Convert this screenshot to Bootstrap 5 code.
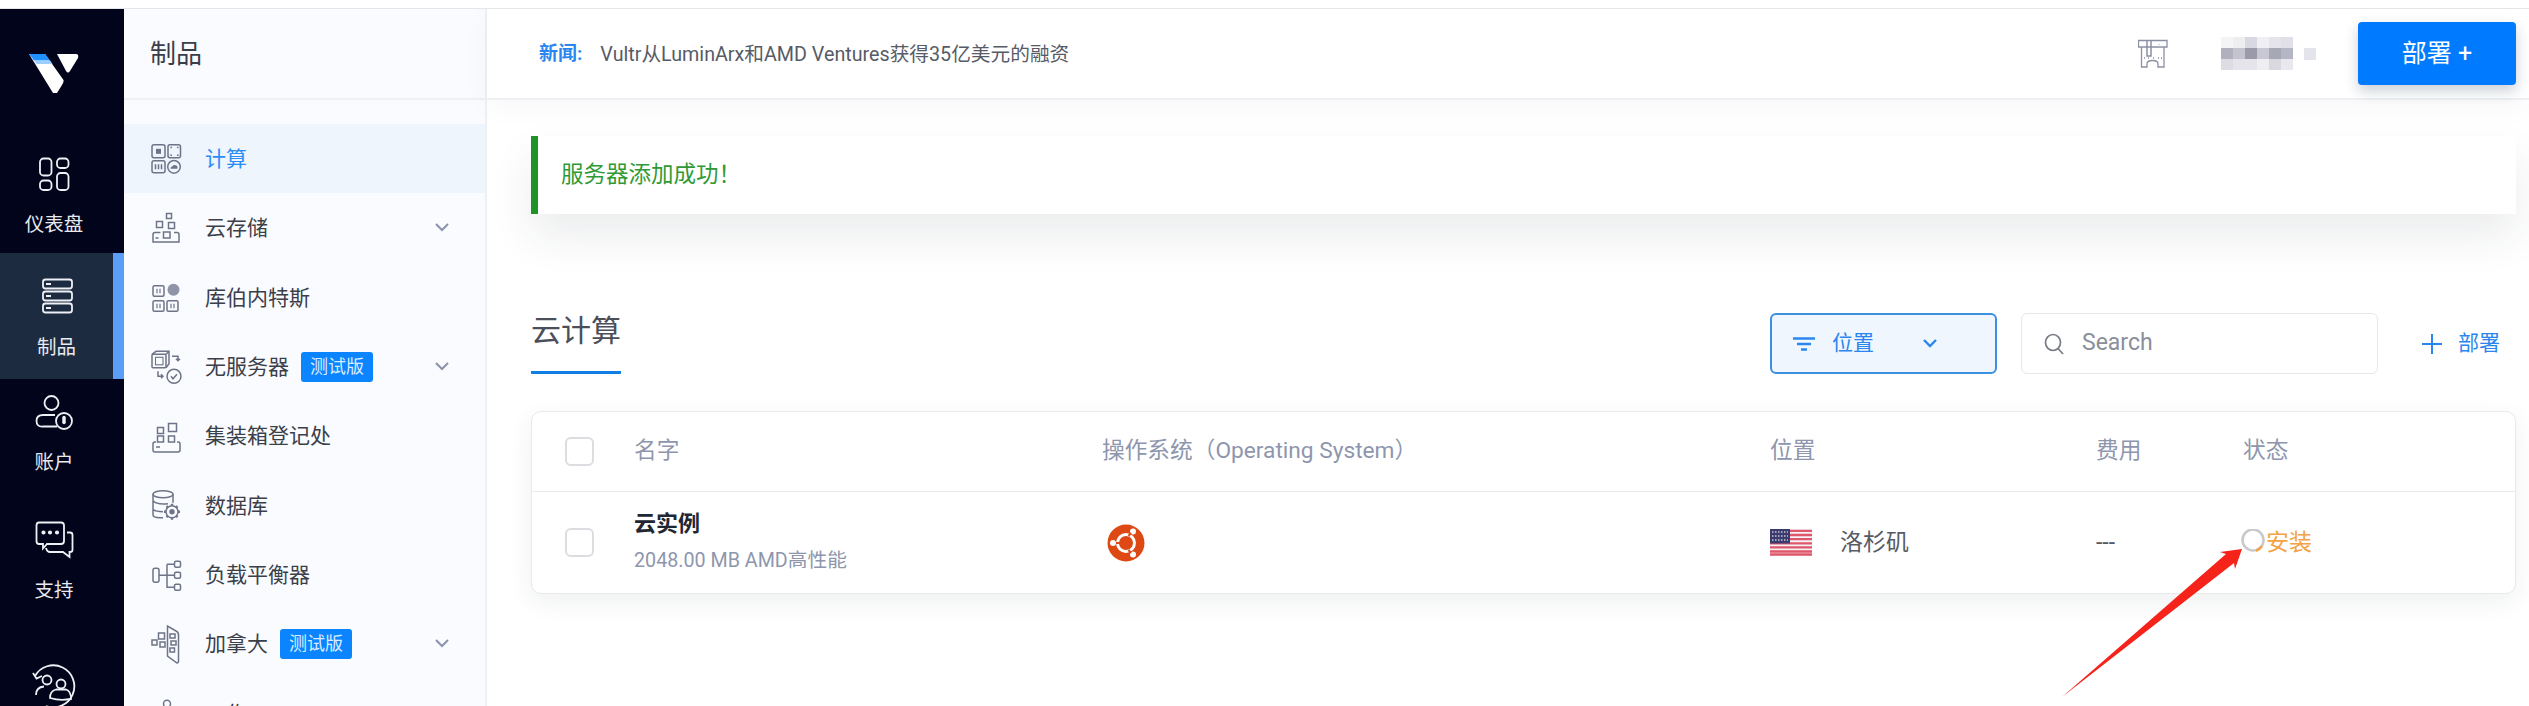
<!DOCTYPE html>
<html lang="zh-CN">
<head>
<meta charset="utf-8">
<title>Vultr</title>
<link href="https://cdn.jsdelivr.net/npm/bootstrap@5.3.0/dist/css/bootstrap.min.css" rel="stylesheet">
<style>
html,body{height:100%;overflow:hidden;background:#fff}
body{font-family:Roboto,"Noto Sans CJK SC",sans-serif;color:#3f4450}
.top-strip{height:9px;border-bottom:1px solid #e6e6e8;background:#fff}
.shell{height:697px;overflow:hidden;position:relative}
.rail{width:124px;background:#01041a;color:#e8eaf0;flex:none}
.rail-logo{height:117px;flex:none}
.rail-logo svg{display:block;margin-left:24px;margin-top:40px}
.rail-item{height:126.67px;flex:none;width:108px;font-size:19.5px;line-height:28px;text-align:center;color:#e8eaf0;text-decoration:none}
.rail-item svg{display:block;margin:0 auto;fill:none;stroke:#eef0f5;stroke-width:1.8}
.rail-item.on{width:124px;background:#1d2b40;border-right:11px solid #5a9ef8}
.ra{padding-top:28px}.ra svg{margin-bottom:17px}
.rb{padding-top:23px}.rb svg{margin-bottom:18px}
.rc{padding-top:14px}.rc svg{margin-bottom:16px}
.rd{padding-top:14px}.rd svg{margin-bottom:17px}
.re{padding-top:28px}
.subnav{width:363px;flex:none;background:#fafbfe;border-right:2px solid #eef0f3}
.subnav-head{height:91px;border-bottom:2px solid #eef0f3;font-size:26px;padding:2px 0 0 26px;color:#3a3e49;margin-bottom:24px}
.sub-item{height:69.33px;padding-left:26px;font-size:21px;color:#3b3f4a;text-decoration:none}
.sub-item svg.ic{width:36px;height:44px;flex:none;margin-right:19px;fill:none;stroke:#6e7487;stroke-width:1.5}
.sub-item .fillg{fill:#6e7487;stroke:none}
.sub-item .fillk{fill:#8f94a6;stroke:none}
.sub-item .lbl{padding-top:2px}
.sub-item.on{background:#eef5fd;color:#2a8cf5}
.beta{background:#0a84ff;color:#d9ecff;font-size:18px;width:72px;height:30px;border-radius:3px;margin-left:12px}
.chev{margin-left:auto;margin-right:36px;fill:none;stroke:#8a93ab;stroke-width:2}
.main-pane{min-width:0;background:#fff}
.topbar{height:91px;border-bottom:2px solid #eef0f3;box-shadow:0 6px 30px rgba(30,40,60,.035);padding:0 13px 0 52px;position:relative}
.news-k{color:#2a86ee;font-weight:700;font-size:19px;margin-right:18px;padding-top:2px}
.news-t{font-size:19.7px;color:#565b66;padding-top:2px}
.ticket{margin-right:53px;fill:none;stroke:#8c90a2;stroke-width:1.3}
.mosaic{display:grid;grid-template-columns:repeat(6,12px);grid-auto-rows:11px;margin-right:11px}
.mosaic i:nth-child(1){background:#f4f4f7}.mosaic i:nth-child(2){background:#eeeef1}.mosaic i:nth-child(3){background:#d8d8e2}.mosaic i:nth-child(4){background:#f0f0f4}.mosaic i:nth-child(5){background:#e4e4ea}.mosaic i:nth-child(6){background:#e0e0e8}
.mosaic i:nth-child(7){background:#b0b0be}.mosaic i:nth-child(8){background:#c4c4ce}.mosaic i:nth-child(9){background:#9a9aab}.mosaic i:nth-child(10){background:#c8c8d4}.mosaic i:nth-child(11){background:#a8a8b4}.mosaic i:nth-child(12){background:#b4b6c6}
.mosaic i:nth-child(13){background:#dcdce2}.mosaic i:nth-child(14){background:#e4e4ea}.mosaic i:nth-child(15){background:#e4e4ea}.mosaic i:nth-child(16){background:#eeeef2}.mosaic i:nth-child(17){background:#d8d8de}.mosaic i:nth-child(18){background:#e8e8ee}
.mosaic-dot{width:12px;height:12px;background:#e4e4ec;margin-right:42px}
.deploy{width:158px;height:63px;background:#007bff;border:0;border-radius:4px;color:#fff;font-size:25px;box-shadow:0 6px 14px rgba(20,40,70,.22)}
.content{padding-left:44px;padding-right:13px}
.notice{margin-top:36px;height:78px;background:#fff;border-left:7px solid #1f9326;box-shadow:0 22px 44px rgba(30,40,60,.09);padding-left:23px;font-size:22.5px;color:#2f9a35}
.tools{margin-top:99px;height:61px}
.page-title{height:61px;width:90px;font-size:30px;font-weight:400;line-height:36px;color:#4a4f5a;border-bottom:3px solid #0f7fe6}
.filter{width:227px;height:61px;margin-left:auto;background:#eff6fe;border:2px solid #3d8fe0;border-radius:6px;color:#2a86ee;font-size:21px;padding:0 0 0 20px}
.filter svg{fill:none;stroke:#2a86ee;stroke-width:2.4}
.filter .chv{margin-right:58px}
.search{width:357px;height:61px;margin-left:24px;border:1px solid #e6e7ea;border-radius:6px;background:#fff;padding-left:22px}
.search input{border:0;outline:0;background:transparent;font-size:23px;padding:0 0 0 17px;width:280px;font-family:Roboto,sans-serif;box-shadow:none}
.search input::placeholder{color:#8a8f9a;opacity:1}
.add-link{margin-left:44px;width:94px;height:61px;color:#2a86ee;font-size:21px;text-decoration:none}
.sheet{margin-top:37px;border:1px solid #e8e9ec;border-radius:10px;box-shadow:0 8px 24px rgba(30,40,60,.07);overflow:hidden;height:183px}
.grid-t{table-layout:fixed;width:100%;margin:0;--bs-table-bg:transparent}
.grid-t th,.grid-t td{padding:0;vertical-align:middle;border-bottom:0}
.grid-t thead th{height:79px;font-weight:400;font-size:22.7px;color:#8e96ad;border-bottom:1px solid #e8e9ec}
.grid-t tbody td{height:103px;font-size:23px;color:#565b66}
.w-a{width:102px}.w-b{width:468px}.w-c{width:668px}.w-d{width:326px}.w-e{width:147px}
.cb{width:29px;height:29px;margin:0 0 0 33px;border:2px solid #dcdde0;border-radius:3px;background:#fff;box-shadow:none}
.inst{font-weight:700;font-size:22px;color:#222632;line-height:26px;margin-bottom:11px}
.spec{font-size:19.7px;color:#8e96ad;line-height:26px}
.inst-wrap{margin-top:-1px}
.os-ic{margin-left:5px}
.city{margin-left:28px}
.fee{font-size:22px}
.status{color:#f5a244;margin-left:-2px}
.arrow{position:absolute;left:0;top:-9px;width:2529px;height:706px;pointer-events:none}
</style>
</head>
<body>
<div class="top-strip"></div>
<div class="shell d-flex">
  <nav class="rail d-flex flex-column">
    <div class="rail-logo">
      <svg width="56" height="44" viewBox="24 49 56 44">
        <path d="M29 54H45L63.5 80Q64 82 62 85L57 93Q55 95.500 53 93Z" fill="#fff"/>
        <path d="M29 54H45L50 60.500H34Z" fill="#1e90ff"/>
        <path d="M34 60.500H50L52.500 64H36.500Z" fill="#9ccfff"/>
        <path d="M57 54H76Q79 54 78 58L70 71Q68 74 66 71Z" fill="#fff"/>
      </svg>
    </div>
    <a class="rail-item ra d-block" href="#">
      <svg width="40" height="40" viewBox="34 154 40 40"><rect x="40" y="158.500" width="11.500" height="17" rx="3.500"/><rect x="40" y="180.500" width="11.500" height="9.500" rx="3.500"/><rect x="57" y="158.500" width="11.500" height="9.500" rx="3.500"/><rect x="57" y="173" width="11.500" height="17" rx="3.500"/></svg>
      <span>仪表盘</span>
    </a>
    <a class="rail-item on rb d-block" href="#">
      <svg width="40" height="40" viewBox="37 275 40 40"><rect x="43" y="278.500" width="29" height="9" rx="2.500"/><rect x="43" y="290.500" width="29" height="9" rx="2.500"/><rect x="43" y="302.500" width="29" height="9" rx="2.500"/><path d="M46 283h5M46 295h5M46 307h5" stroke-width="2"/></svg>
      <span>制品</span>
    </a>
    <a class="rail-item rc d-block" href="#">
      <svg width="40" height="40" viewBox="34 393 40 40"><circle cx="51.500" cy="403" r="7"/><path d="M55 415H43Q36.500 415 36.500 421T43 426.500H57"/><circle cx="64" cy="421" r="8"/><path d="M64 417.500v5" stroke-width="3.500" stroke-linecap="round"/></svg>
      <span>账户</span>
    </a>
    <a class="rail-item rd d-block" href="#">
      <svg width="40" height="40" viewBox="34 519 40 40"><path d="M39 521.500H61Q64 521.500 64 524.500V540Q64 543 61 543H47L43 547.500V543H39Q36.500 543 36.500 540V524.500Q36.500 521.500 39 521.500Z"/><path d="M67 531.500H70Q72.500 531.500 72.500 534V549Q72.500 551 70 551H69.500V556L63 551H50Q47 551 46 547"/><circle cx="43.500" cy="531.500" r="1.200" fill="#eef0f5"/><circle cx="50" cy="531.500" r="1.200" fill="#eef0f5"/><circle cx="57" cy="531.500" r="1.200" fill="#eef0f5"/></svg>
      <span>支持</span>
    </a>
    <a class="rail-item re d-block" href="#">
      <svg width="50" height="50" viewBox="29 660 50 50"><path d="M35 675A21 21 0 1 1 46 705M33 672L36.500 677.500L42 675"/><circle cx="47" cy="679" r="4.500"/><circle cx="61" cy="683" r="4.500"/><path d="M36 694Q36 686 44 685.500M50 697Q50 690 56 688.500H66Q71 690 71 698Q60 700 50 697Z"/></svg>
    </a>
  </nav>

  <aside class="subnav">
    <div class="subnav-head d-flex align-items-center">制品</div>
    <a class="sub-item on d-flex align-items-center" href="#">
      <svg class="ic" viewBox="150 136.670 36 44"><rect x="152" y="144.500" width="13" height="13" rx="2"/><rect class="fillg" x="156" y="148.500" width="5" height="5"/><rect x="168" y="144.500" width="12.500" height="13" rx="2"/><path d="M171 148v-1h1M177 147h1v1M171 154v1h1M178 154v1h-1" stroke-width="1.100"/><rect x="152" y="160.500" width="13" height="12" rx="2"/><path d="M155.500 164v5M158.500 164v5M161.500 164v5"/><circle cx="174" cy="166.500" r="6.300"/><path class="fillg" d="M170.500 168.500q0-2.500 2-2.500q1-2 3-1q2 0 2 2q.5 1.500-1 1.500Z"/></svg>
      <span class="lbl">计算</span>
    </a>
    <a class="sub-item d-flex align-items-center" href="#">
      <svg class="ic" viewBox="150 206 36 44"><rect x="166.500" y="213.500" width="5" height="5"/><rect x="156.500" y="221.500" width="6" height="6"/><rect x="168.500" y="222.500" width="6" height="6"/><path d="M160.500 232.500H155Q153 232.500 153 234.500V242H179V234.500Q179 232.500 177 232.500H174"/><rect x="163.500" y="232" width="6.500" height="6"/><path d="M155.500 238h3"/></svg>
      <span class="lbl">云存储</span>
      <svg class="chev" width="14" height="9" viewBox="0 0 14 9"><path d="M1 1l6 6 6-6"/></svg>
    </a>
    <a class="sub-item d-flex align-items-center" href="#">
      <svg class="ic" viewBox="150 275.300 36 44"><rect x="153" y="286" width="11" height="10.500" rx="1.500"/><path d="M157 289v4.500M160 289v4.500" stroke-width="1.200"/><circle class="fillk" cx="173.500" cy="290" r="6"/><rect x="153" y="301" width="11" height="10.500" rx="1.500"/><path d="M157 304v4.500M160 304v4.500" stroke-width="1.200"/><rect x="167" y="301" width="11" height="10.500" rx="1.500"/><path d="M171 304v4.500M174 304v4.500" stroke-width="1.200"/></svg>
      <span class="lbl">库伯内特斯</span>
    </a>
    <a class="sub-item d-flex align-items-center" href="#">
      <svg class="ic" viewBox="150 344.700 36 44"><rect x="152" y="354" width="14" height="13.500" rx="1"/><path d="M152 354l4-3h13v12.500l-3 4M166 354l3-3"/><rect x="155.500" y="357" width="7.500" height="7.500" stroke-width="1.100"/><path d="M172 356h6v4M176 358.500l2 2 2-2M158 371v5h5M161 374l2 2-2 2"/><circle cx="174" cy="376" r="7"/><path d="M171 376l2 2.500 4-4.500"/></svg>
      <span class="lbl">无服务器</span>
      <span class="beta d-flex align-items-center justify-content-center">测试版</span>
      <svg class="chev" width="14" height="9" viewBox="0 0 14 9"><path d="M1 1l6 6 6-6"/></svg>
    </a>
    <a class="sub-item d-flex align-items-center" href="#">
      <svg class="ic" viewBox="150 414 36 44"><rect x="157.500" y="427.500" width="6" height="6"/><rect x="168.500" y="423.500" width="8" height="8"/><rect x="157.500" y="436" width="6" height="6"/><rect x="168.500" y="436" width="6" height="6"/><path d="M156 442H155Q153 442 153 444V450Q153 452 155 452H178Q180 452 180 450V444Q180 442 178 442H177M156 447h4"/></svg>
      <span class="lbl">集装箱登记处</span>
    </a>
    <a class="sub-item d-flex align-items-center" href="#">
      <svg class="ic" viewBox="150 483.300 36 44"><ellipse cx="163" cy="494.500" rx="10" ry="3.500"/><path d="M153 494.500V515Q153 518 160 518H163M173 494.500V503M153 501Q156 505 168 504M153 510Q156 512 163 512"/><circle cx="172" cy="512" r="6"/><circle class="fillg" cx="172" cy="512" r="2.700"/><path d="M172 504v2M172 518v2M164 512h2M178 512h2M166.500 506.500l1.500 1.500M176 516l1.500 1.500M166.500 517.500l1.500-1.500M176 508l1.500-1.500" stroke-width="2.400"/></svg>
      <span class="lbl">数据库</span>
    </a>
    <a class="sub-item d-flex align-items-center" href="#">
      <svg class="ic" viewBox="150 552.700 36 44"><rect x="153" y="568" width="6" height="14" rx="2"/><path d="M159 575H174M167 564V587H174M167 564H174"/><rect x="174.500" y="561" width="6" height="6" rx="1.500"/><rect x="174.500" y="572" width="6" height="6" rx="1.500"/><rect x="174.500" y="584" width="6" height="6" rx="1.500"/></svg>
      <span class="lbl">负载平衡器</span>
    </a>
    <a class="sub-item d-flex align-items-center" href="#">
      <svg class="ic" viewBox="150 622 36 44"><rect x="152" y="640" width="5" height="5"/><rect x="158.500" y="633" width="6" height="6"/><rect x="160" y="642" width="5" height="5"/><path d="M167.500 626V656L177 663Q178.500 663 178.500 661V635Q178.500 632 176 631Z"/><rect x="170" y="634" width="5" height="4"/><rect x="171" y="641" width="5" height="4"/><rect x="170" y="648" width="4.500" height="4"/></svg>
      <span class="lbl">加拿大</span>
      <span class="beta d-flex align-items-center justify-content-center">测试版</span>
      <svg class="chev" width="14" height="9" viewBox="0 0 14 9"><path d="M1 1l6 6 6-6"/></svg>
    </a>
    <a class="sub-item d-flex align-items-center" href="#">
      <svg class="ic" viewBox="150 691.300 36 44"><circle cx="167" cy="704" r="3.500"/></svg>
      <span class="lbl">工作</span>
    </a>
  </aside>

  <main class="main-pane flex-grow-1">
    <header class="topbar d-flex align-items-center">
      <span class="news-k">新闻:</span>
      <span class="news-t">Vultr从LuminArx和AMD Ventures获得35亿美元的融资</span>
      <svg class="ticket ms-auto" width="30" height="30" viewBox="2138 39 30 30"><path d="M2138.500 40.500H2167V47H2138.500ZM2141.500 47V67H2147V64Q2147 60.500 2152.500 60.500T2158 64V67H2164V47"/><path d="M2147 41v15h4V41M2159 44v.5M2144 58h1M2148 58h1M2153 58h1M2158 58h1M2161 58h1" stroke-width="1.500"/></svg>
      <div class="mosaic"><i></i><i></i><i></i><i></i><i></i><i></i><i></i><i></i><i></i><i></i><i></i><i></i><i></i><i></i><i></i><i></i><i></i><i></i></div>
      <div class="mosaic-dot"></div>
      <button class="deploy btn d-flex align-items-center justify-content-center" type="button">部署 +</button>
    </header>
    <div class="content">
      <div class="notice d-flex align-items-center">服务器添加成功！</div>
      <div class="tools d-flex align-items-start">
        <div class="page-title">云计算</div>
        <button class="filter btn d-flex align-items-center" type="button">
          <svg width="24" height="14" viewBox="0 0 24 14"><path d="M1 1.500H23M5 7H19M9 12.500H15"/></svg>
          <span class="ms-3">位置</span>
          <svg class="chv ms-auto" width="14" height="9" viewBox="0 0 14 9"><path d="M1 1l6 6 6-6"/></svg>
        </button>
        <div class="search d-flex align-items-center">
          <svg width="21" height="22" viewBox="0 0 21 22" fill="none" stroke="#767b86" stroke-width="1.700"><ellipse cx="9" cy="9.500" rx="7.500" ry="8"/><path d="M14 15.500l5 5.500"/></svg>
          <input class="form-control" type="text" placeholder="Search" aria-label="Search">
        </div>
        <a class="add-link d-flex align-items-center" href="#">
          <svg width="20" height="20" viewBox="0 0 20 20" fill="none" stroke="#2a86ee" stroke-width="2"><path d="M10 0V20M0 10H20"/></svg>
          <span class="ms-3">部署</span>
        </a>
      </div>
      <div class="sheet card">
        <table class="grid-t table">
          <colgroup><col class="w-a"><col class="w-b"><col class="w-c"><col class="w-d"><col class="w-e"><col></colgroup>
          <thead>
            <tr><th><input class="cb form-check-input d-block" type="checkbox" aria-label="全选"></th><th>名字</th><th>操作系统（Operating System）</th><th>位置</th><th>费用</th><th>状态</th></tr>
          </thead>
          <tbody>
            <tr>
              <td><input class="cb form-check-input d-block" type="checkbox" aria-label="选择"></td>
              <td><div class="inst-wrap"><div class="inst">云实例</div><div class="spec">2048.00 MB AMD高性能</div></div></td>
              <td>
                <svg class="os-ic d-block" width="38" height="38" viewBox="0 0 38 38"><circle cx="19" cy="19" r="18.500" fill="#dd4814"/><circle cx="19" cy="19" r="8.500" fill="none" stroke="#fff" stroke-width="3"/><g fill="#fff"><circle cx="26" cy="7.500" r="3"/><circle cx="6" cy="19" r="3"/><circle cx="26" cy="30.500" r="3"/></g><g stroke="#dd4814" stroke-width="2"><path d="M21.500 12l2.500-3M9 19h4M21.500 26l2.500 3"/></g></svg>
              </td>
              <td>
                <div class="d-flex align-items-center">
                  <svg width="42" height="27" viewBox="0 0 42 27"><rect width="42" height="27" fill="#f4f4f6"/><path d="M0 1.900H42M0 6H42M0 10.200H42M0 14.300H42M0 18.400H42M0 22.500H42M0 25.500H42" stroke="#e0566b" stroke-width="2.300"/><rect width="20" height="14.500" fill="#3c3b6e"/><path d="M2 3H18M2 7H18M2 11H18" stroke="#c8c8dc" stroke-width="1.300" stroke-dasharray="1.500 1.500"/></svg>
                  <span class="city">洛杉矶</span>
                </div>
              </td>
              <td class="fee">---</td>
              <td>
                <div class="status d-flex align-items-center">
                  <svg width="25" height="28" viewBox="0 0 25 28" fill="none" stroke-width="2.500"><circle cx="12" cy="11" r="10.500" stroke="#c9c9cc"/><path d="M21 17a10.500 10.500 0 0 1-6 4.800" stroke="#f5a244"/></svg>
                  <span>安装</span>
                </div>
              </td>
            </tr>
          </tbody>
        </table>
      </div>
    </div>
  </main>
  <svg class="arrow" viewBox="0 0 2529 706"><polygon points="2062,697 2226,554 2220,552 2242,549 2235,569 2234,563" fill="#f5231a"/></svg>
</div>
<script src="https://cdn.jsdelivr.net/npm/bootstrap@5.3.0/dist/js/bootstrap.bundle.min.js"></script>
</body>
</html>
